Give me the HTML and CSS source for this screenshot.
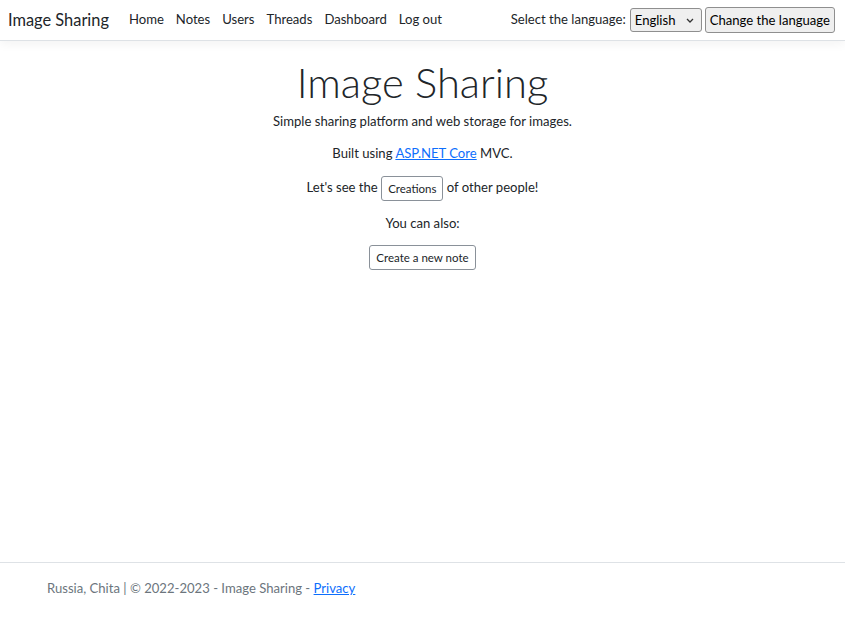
FILE: index.html
```html
<!DOCTYPE html>
<html lang="en">
<head>
<meta charset="utf-8">
<title>Image Sharing</title>
<link rel="stylesheet" href="styles.css">
</head>
<body>
<header class="navbar">
  <a class="brand" href="#">Image Sharing</a>
  <nav class="nav">
    <a class="nav-link" href="#">Home</a>
    <a class="nav-link" href="#">Notes</a>
    <a class="nav-link" href="#">Users</a>
    <a class="nav-link" href="#">Threads</a>
    <a class="nav-link" href="#">Dashboard</a>
    <a class="nav-link" href="#">Log out</a>
  </nav>
  <form class="lang">
    <label class="lang-label">Select the language:</label>
    <select class="lang-select"><option>English</option></select>
    <button type="button" class="lang-btn">Change the language</button>
  </form>
</header>
<main class="main">
  <h1 class="display">Image Sharing</h1>
  <p class="line first">Simple sharing platform and web storage for images.</p>
  <p class="line">Built using <a class="link" href="#">ASP.NET Core</a> MVC.</p>
  <p class="line">Let's see the <button type="button" class="btn-sm">Creations</button> of other people!</p>
  <p class="line short">You can also:</p>
  <p class="line"><button type="button" class="btn-sm">Create a new note</button></p>
</main>
<footer class="footer">
  <div class="footer-inner">Russia, Chita | © 2022-2023 - Image Sharing - <a class="link" href="#">Privacy</a></div>
</footer>
</body>
</html>
```
FILE: styles.css
```css
html, body {
  margin: 0;
  height: 100%;
}
body {
  font-family: Lato, "Open Sans", sans-serif;
  font-size: 13.1px;
  line-height: 1.5;
  color: #212529;
  background: #fff;
  display: flex;
  flex-direction: column;
}
.navbar {
  height: 40px;
  display: flex;
  align-items: center;
  padding: 0 10px 0 8px;
  border-bottom: 1px solid #dee2e6;
  box-shadow: 0 3px 10px rgba(0,0,0,.05);
  box-sizing: content-box;
}
.brand {
  font-size: 16.4px;
  color: #212529;
  text-decoration: none;
  margin-right: 14px;
}
.nav {
  display: flex;
  flex: 1;
}
.nav-link {
  color: #212529;
  text-decoration: none;
  padding: 0 6px;
}
.lang {
  display: flex;
  align-items: center;
  gap: 3px;
  margin: 0;
}
.lang-label { color: #212529; margin-right: 1px; }
.lang-select, .lang-btn {
  font-family: inherit;
  font-size: 13.1px;
  color: #000;
  background-color: #efefef;
  border: 1px solid #8f8f8f;
  border-radius: 3px;
  box-sizing: border-box;
}
.lang-select {
  appearance: none;
  -webkit-appearance: none;
  width: 72px;
  height: 24px;
  padding: 0 0 0 4px;
  background-image: url("data:image/svg+xml,%3Csvg xmlns='http://www.w3.org/2000/svg' width='8' height='5' viewBox='0 0 8 5'%3E%3Cpath d='M1 1l3 3 3-3' fill='none' stroke='%23333' stroke-width='1.3'/%3E%3C/svg%3E");
  background-repeat: no-repeat;
  background-position: right 7px center;
}
.lang-btn { height: 26px; padding: 0 4px; }
.main {
  flex: 1;
  text-align: center;
  padding-top: 16px;
}
.display {
  font-size: 41.7px;
  font-weight: 300;
  line-height: 1.2;
  margin: 0 0 5px;
}
.line {
  margin: 0 0 13px;
}
.line.first { margin-bottom: 12px; }
.line.short { margin-bottom: 11px; }
.link { color: #0d6efd; }
.btn-sm {
  font-family: inherit;
  font-size: 11.5px;
  color: #212529;
  background: #fff;
  border: 1px solid #8a9199;
  border-radius: 3px;
  padding: 0 6px;
  height: 25px;
  line-height: 23px;
  vertical-align: middle;
}
.footer {
  border-top: 1px solid #dee2e6;
  height: 61px;
  color: #6c757d;
}
.footer-inner {
  padding-left: 47px;
  line-height: 50px;
}
```
